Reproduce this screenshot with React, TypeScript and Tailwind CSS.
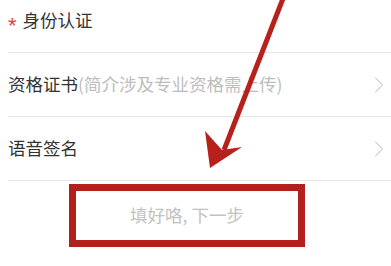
import { ChevronRight } from 'lucide-react';

const FONT = { fontFamily: '"Noto Sans CJK SC", "Noto Sans", sans-serif' };

function Row({ children, arrow }: { children: React.ReactNode; arrow?: boolean }) {
  return (
    <div className="flex h-[64px] items-center border-b border-[#e6e6e6]">
      <div className="flex flex-1 items-center text-[17.5px] text-[#333]">{children}</div>
      {arrow && <ChevronRight size={28} strokeWidth={0.9} className="-mr-[2px] text-[#c4c4c4]" />}
    </div>
  );
}

export default function App() {
  return (
    <div className="relative h-[266px] w-[391px] overflow-hidden bg-white" style={FONT}>
      <div className="-mt-[11px] pl-[8px]">
        <Row>
          <span className="mr-[6px] mt-[10px] font-['Liberation_Sans',sans-serif] text-[22px] leading-none text-[#e8413b]">*</span>
          身份认证
        </Row>
        <Row arrow>
          资格证书
          <span className="text-[#bdbdbd]">(简介涉及专业资格需上传)</span>
        </Row>
        <Row arrow>语音签名</Row>
      </div>
      <div className="flex justify-center pt-[3px]">
        <button className="ml-[-17px] flex h-[63px] w-[236px] items-center justify-center border-[7px] border-[#b3201c] bg-white text-[17.5px] text-[#c2c2c2]">
          填好咯, 下一步
        </button>
      </div>
      <svg className="pointer-events-none absolute left-0 top-0" width="391" height="266" viewBox="0 0 391 266">
        <line x1="284" y1="-4" x2="224" y2="150" stroke="#b8201c" strokeWidth="5" />
        <polygon points="210,168 205,131 222,150 242,147" fill="#b8201c" />
      </svg>
    </div>
  );
}
